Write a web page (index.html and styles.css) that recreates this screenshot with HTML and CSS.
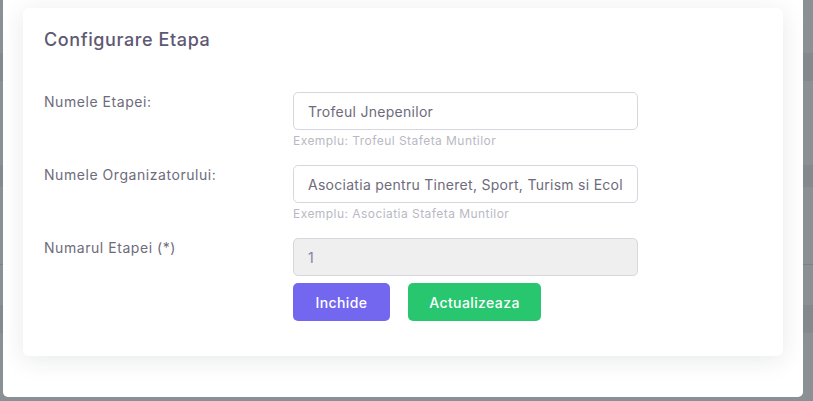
FILE: index.html
```html
<!DOCTYPE html>
<html lang="ro">
<head>
<meta charset="utf-8">
<title>Configurare Etapa</title>
<link rel="stylesheet" href="styles.css">
</head>
<body>
<div class="modal">
  <div class="card">
    <h4 class="card-title">Configurare Etapa</h4>
    <form class="form">
      <div class="row">
        <label class="label">Numele Etapei:</label>
        <div class="field">
          <input class="input" type="text" value="Trofeul Jnepenilor">
          <small class="help">Exemplu: Trofeul Stafeta Muntilor</small>
        </div>
      </div>
      <div class="row">
        <label class="label">Numele Organizatorului:</label>
        <div class="field">
          <input class="input" type="text" value="Asociatia pentru Tineret, Sport, Turism si Ecologie">
          <small class="help">Exemplu: Asociatia Stafeta Muntilor</small>
        </div>
      </div>
      <div class="row row-last">
        <label class="label">Numarul Etapei (*)</label>
        <div class="field">
          <input class="input input-disabled" type="text" value="1" disabled>
          <div class="actions">
            <button type="button" class="btn btn-primary">Inchide</button>
            <button type="button" class="btn btn-success">Actualizeaza</button>
          </div>
        </div>
      </div>
    </form>
  </div>
</div>
</body>
</html>
```

FILE: styles.css
```css
* { box-sizing: border-box; }

html, body {
  margin: 0;
  height: 401px;
  overflow: hidden;
}

body {
  font-family: Inter, "Noto Sans", sans-serif;
  background-color: #8b9094;
  background-image: linear-gradient(to bottom,
    transparent 0, transparent 53px,
    #84898d 53px, #84898d 81px,
    transparent 81px, transparent 165px,
    #84898d 165px, #84898d 187px,
    transparent 187px, transparent 264px,
    #7d8286 264px, #7d8286 265px,
    transparent 265px, transparent 305px,
    #84898d 305px, #84898d 333px,
    transparent 333px);
  padding-left: 3px;
}

.modal {
  width: 800px;
  height: 397px;
  background: #fff;
  border-radius: 0 0 5px 5px;
  padding: 8px 20px 0;
}

.card {
  width: 760px;
  height: 348px;
  background: #fff;
  border-radius: 6px;
  box-shadow: 0 4px 24px 0 rgba(34, 41, 47, 0.1);
  padding: 21px 21px 0;
}

.card-title {
  margin: 0;
  font-size: 18px;
  line-height: 22px;
  font-weight: 500;
  letter-spacing: 0.6px;
  color: #5e5873;
}

.form {
  margin-top: 41px;
  display: flex;
  flex-direction: column;
  gap: 16px;
}

.row {
  display: grid;
  grid-template-columns: 249px 345px;
  align-items: start;
}

.label {
  font-size: 14px;
  line-height: 20px;
  letter-spacing: 0.55px;
  color: #6e6b7b;
}

.field {
  display: flex;
  flex-direction: column;
}

.input {
  width: 345px;
  height: 38px;
  border: 1px solid #d8d6de;
  border-radius: 5px;
  padding: 0 14px;
  font-family: inherit;
  font-size: 14px;
  letter-spacing: 0.28px;
  color: #6e6b7b;
  background: #fff;
  outline: none;
}

.input-disabled {
  background: #efefef;
  color: #8a7ea8;
  -webkit-text-fill-color: #8a7ea8;
  opacity: 1;
}

.help {
  margin-top: 3px;
  font-size: 12px;
  line-height: 16px;
  letter-spacing: 0.45px;
  color: #b9b9c3;
}

.actions {
  display: flex;
  gap: 18px;
  margin-top: 7px;
}

.btn {
  height: 38px;
  border: none;
  border-radius: 5px;
  font-family: inherit;
  font-size: 14px;
  font-weight: 500;
  letter-spacing: 0.4px;
  color: #fff;
  padding: 0;
}

.btn-primary {
  width: 97px;
  background: #7367f0;
}

.btn-success {
  width: 133px;
  background: #28c76f;
}
```
